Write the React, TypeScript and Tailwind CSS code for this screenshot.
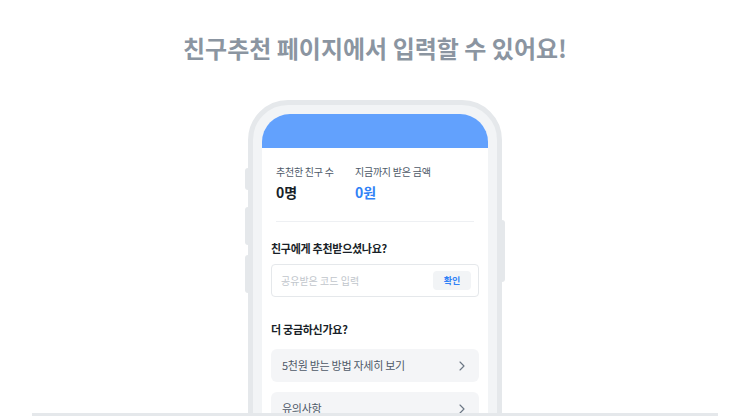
import { ChevronRight } from "lucide-react";

const FONT = "font-['Noto_Sans_CJK_KR','Noto_Sans',sans-serif]";

function Stat({ label, value, blue }: { label: string; value: string; blue?: boolean }) {
  return (
    <div className="w-[79px]">
      <p className="text-[10px] leading-[14px] tracking-tight text-[#4e5968]">{label}</p>
      <p className={`mt-[3px] text-[14px] font-bold leading-[20px] ${blue ? "text-[#3182f6]" : "text-[#191f28]"}`}>
        {value}
      </p>
    </div>
  );
}

function LinkRow({ label }: { label: string }) {
  return (
    <div className="flex h-[33px] items-center justify-between rounded-[6px] bg-[#f4f5f7] pl-[11px] pr-[9px]">
      <span className="text-[11px] tracking-tight text-[#4e5968]">{label}</span>
      <ChevronRight className="h-[16px] w-[16px] text-[#6b7684]" strokeWidth={1.7} />
    </div>
  );
}

export default function App() {
  return (
    <div className={`relative h-[416px] w-[750px] overflow-hidden bg-white ${FONT}`}>
      <h1 className="pt-[32px] text-center text-[24px] font-bold leading-[32px] text-[#8b95a1]">
        친구추천 페이지에서 입력할 수 있어요!
      </h1>

      <div className="relative mx-auto mt-[36px] w-[254px]">
        {/* side buttons */}
        <div className="absolute left-[-3px] top-[68px] h-[22px] w-[3px] rounded-l-sm bg-[#e5e8eb]" />
        <div className="absolute left-[-3px] top-[107px] h-[38px] w-[3px] rounded-l-sm bg-[#e5e8eb]" />
        <div className="absolute left-[-3px] top-[155px] h-[38px] w-[3px] rounded-l-sm bg-[#e5e8eb]" />
        <div className="absolute right-[-3px] top-[120px] h-[62px] w-[3px] rounded-r-sm bg-[#e5e8eb]" />

        <div className="h-[400px] rounded-[40px] border-[5px] border-[#e5e8eb] bg-[#f2f4f6] p-[9px]">
          <div className="h-full overflow-hidden rounded-t-[28px] bg-white">
            <div className="h-[34px] bg-[#62a1fd]" />

            <div className="flex px-[14px] pt-[17px]">
              <Stat label="추천한 친구 수" value="0명" />
              <Stat label="지금까지 받은 금액" value="0원" blue />
            </div>
            <div className="mx-[14px] mt-[19px] h-px bg-[#eef0f3]" />

            <div className="px-[9px] pt-[18px]">
              <p className="text-[11px] font-bold leading-[16px] tracking-tight text-[#191f28]">친구에게 추천받으셨나요?</p>
              <div className="mt-[8px] flex h-[33px] items-center justify-between rounded-[4px] border border-[#e5e8eb] pl-[9px] pr-[7px]">
                <span className="text-[10px] text-[#c1c6cc]">공유받은 코드 입력</span>
                <button className="h-[19px] w-[38px] rounded-[4px] bg-[#f2f4f6] text-[9px] font-bold text-[#3182f6]">
                  확인
                </button>
              </div>

              <p className="mt-[24px] text-[11px] font-bold leading-[16px] tracking-tight text-[#191f28]">더 궁금하신가요?</p>
              <div className="mt-[12px] flex flex-col gap-[10px]">
                <LinkRow label="5천원 받는 방법 자세히 보기" />
                <LinkRow label="유의사항" />
              </div>
            </div>
          </div>
        </div>
      </div>

      <div className="absolute bottom-0 left-[32px] right-[32px] h-[3px] bg-[#e5e8eb]" />
    </div>
  );
}
